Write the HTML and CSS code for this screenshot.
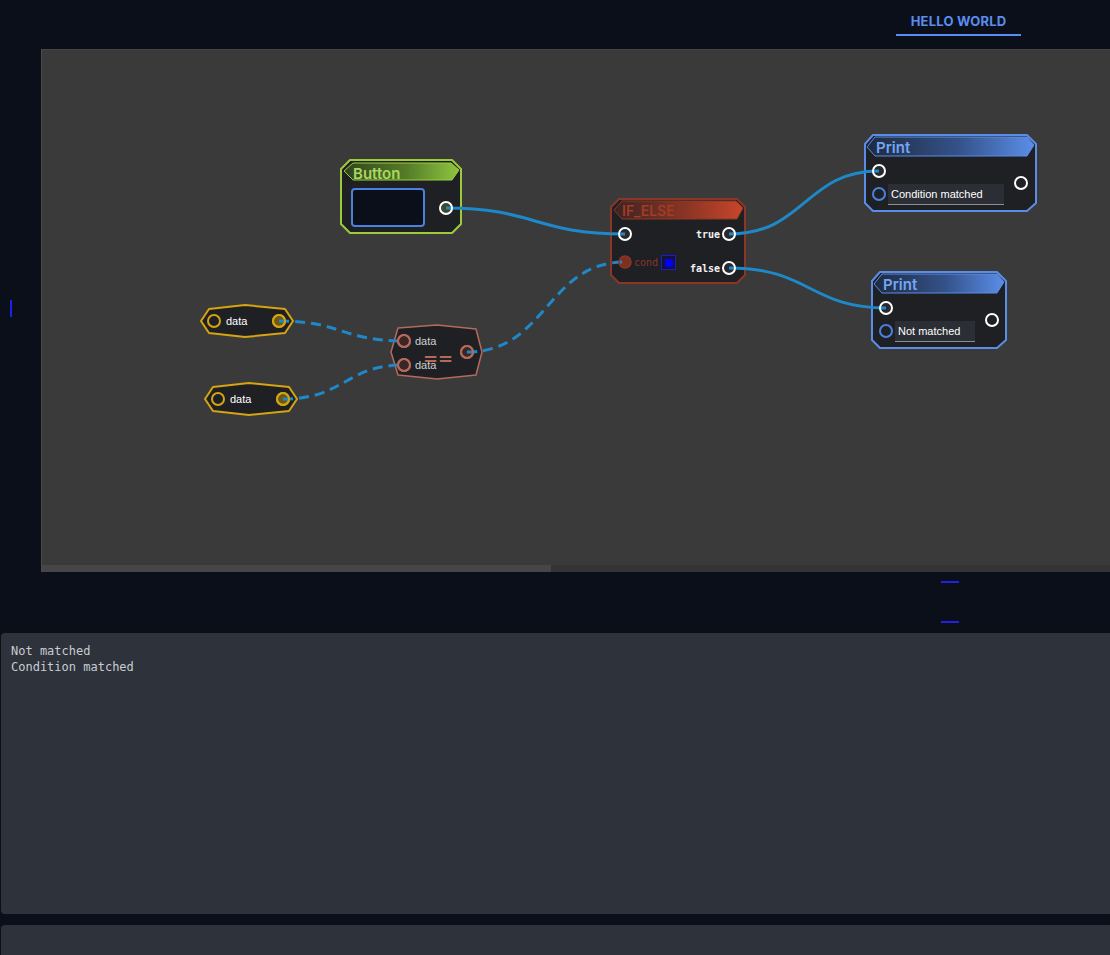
FILE: index.html
```html
<!DOCTYPE html>
<html lang="en">
<head>
<meta charset="utf-8">
<title>Node editor</title>
<link rel="stylesheet" href="styles.css">
</head>
<body>
<header class="topbar">
  <div class="tab">HELLO WORLD</div>
</header>

<section class="editor-row">
  <div class="gutter"><span class="caret"></span></div>
  <div class="canvas">
    <svg class="graph" width="1069" height="516" viewBox="0 0 1069 516" xmlns="http://www.w3.org/2000/svg">
      <defs>
        <linearGradient id="g-green" x1="0" x2="1" y1="0" y2="0">
          <stop offset="0" stop-color="#33421f"/>
          <stop offset="0.55" stop-color="#557d28"/>
          <stop offset="1" stop-color="#8fc640"/>
        </linearGradient>
        <linearGradient id="g-red" x1="0" x2="1" y1="0" y2="0">
          <stop offset="0" stop-color="#3a2423"/>
          <stop offset="0.55" stop-color="#8a3424"/>
          <stop offset="1" stop-color="#c8462a"/>
        </linearGradient>
        <linearGradient id="g-blue" x1="0" x2="1" y1="0" y2="0">
          <stop offset="0" stop-color="#1f2a3e"/>
          <stop offset="0.55" stop-color="#34528a"/>
          <stop offset="1" stop-color="#5b8ee8"/>
        </linearGradient>
      </defs>
      <g transform="translate(-41 -49)">
        <!-- Button node -->
        <g class="node">
          <polygon class="body body-green" points="350,160 452,160 461,169 461,224 452,233 350,233 341,224 341,169"/>
          <polygon class="head-green" points="344,171 353,163 451,163 459,170 452,180 353,180"/>
          <text class="title title-green" x="353" y="173">Button</text>
          <rect class="btn-field" x="352" y="189" width="72" height="37" rx="3"/>
          <circle class="port-fill" cx="446" cy="208" r="6" fill="#3e4a2e"/>
        </g>

        <!-- IF_ELSE node -->
        <g class="node">
          <polygon class="body body-red" points="619,199 737,199 745,207 745,275 737,283 619,283 611,275 611,207"/>
          <polygon class="head-red" points="614,210 622,201 736,201 743,208 737,219 622,219"/>
          <text class="title title-red" x="622" y="210">IF_ELSE</text>
          <circle class="port-fill" cx="625" cy="234" r="6" fill="#2a2a2e"/>
          <text class="mono mono-white" x="720" y="234" text-anchor="end">true</text>
          <circle class="port-fill" cx="729" cy="234" r="6" fill="#2a2a2e"/>
          <circle class="port-cond" cx="625" cy="262" r="6"/>
          <text class="mono mono-red" x="634" y="262">cond</text>
          <rect class="check-box" x="661.5" y="255.5" width="14" height="14"/>
          <rect class="check-fill" x="665" y="259" width="8" height="8"/>
          <text class="mono mono-white" x="720" y="268" text-anchor="end">false</text>
          <circle class="port-fill" cx="729" cy="268" r="6" fill="#2a2a2e"/>
        </g>

        <!-- Print node 1 -->
        <g class="node">
          <polygon class="body body-blue" points="873,135 1027,135 1036,144 1036,203 1027,211 873,211 865,203 865,144"/>
          <polygon class="head-blue" points="867,147 875,137 1027,137 1034,145 1027,156 875,156"/>
          <text class="title title-blue" x="876" y="147">Print</text>
          <circle class="port-fill" cx="879" cy="171" r="6" fill="#2a2a2e"/>
          <circle class="port-fill" cx="1021" cy="183" r="6" fill="#1f2024"/>
          <circle class="port-blue" cx="879" cy="194" r="6"/>
          <rect class="field" x="888" y="184" width="116" height="20"/>
          <line class="field-line" x1="888" y1="204.5" x2="1004" y2="204.5"/>
          <text class="label" x="891" y="194">Condition matched</text>
        </g>

        <!-- Print node 2 -->
        <g class="node">
          <polygon class="body body-blue" points="880,272 997,272 1006,281 1006,340 997,348 880,348 872,340 872,281"/>
          <polygon class="head-blue" points="874,284 882,274 997,274 1004,282 997,293 882,293"/>
          <text class="title title-blue" x="883" y="284">Print</text>
          <circle class="port-fill" cx="886" cy="308" r="6" fill="#2a2a2e"/>
          <circle class="port-fill" cx="992" cy="320" r="6" fill="#1f2024"/>
          <circle class="port-blue" cx="886" cy="331" r="6"/>
          <rect class="field" x="895" y="321" width="80" height="20"/>
          <line class="field-line" x1="895" y1="341.5" x2="975" y2="341.5"/>
          <text class="label" x="898" y="331">Not matched</text>
        </g>

        <!-- data nodes -->
        <g class="node">
          <polygon class="body body-gold" points="209,309 245,305 285,309 293,321 285,333 245,337 209,333 201,321"/>
          <circle class="port-gold" cx="214" cy="321" r="6"/>
          <text class="label" x="226" y="321">data</text>
          <circle class="port-gold port-gold-on" cx="279" cy="321" r="6"/>
        </g>
        <g class="node">
          <polygon class="body body-gold" points="213,387 249,383 289,387 297,399 289,411 249,415 213,411 205,399"/>
          <circle class="port-gold" cx="218" cy="399" r="6"/>
          <text class="label" x="230" y="399">data</text>
          <circle class="port-gold port-gold-on" cx="283" cy="399" r="6"/>
        </g>

        <!-- == node -->
        <g class="node">
          <polygon class="body body-salmon" points="398,328 437,325 476,329 482,352 476,375 437,379 398,375 391,352"/>
          <text class="eq" x="438" y="358" text-anchor="middle">==</text>
          <circle class="port-salmon" cx="404" cy="341" r="6"/>
          <text class="label label-dim" x="415" y="341">data</text>
          <circle class="port-salmon" cx="404" cy="365" r="6"/>
          <text class="label label-dim" x="415" y="365">data</text>
          <circle class="port-salmon" cx="467" cy="352" r="6"/>
        </g>

        <!-- wires -->
        <path class="wire" d="M446,208 C535,208 535,234 625,234"/>
        <path class="wire" d="M729,234 C805,234 805,171 879,171"/>
        <path class="wire" d="M729,268 C810,268 810,308 886,308"/>
        <path class="wire wire-dash" d="M279,321 C342,321 342,341 404,341"/>
        <path class="wire wire-dash" d="M283,399 C345,399 345,365 404,365"/>
        <path class="wire wire-dash" d="M467,352 C547,352 547,262 625,262"/>

        <!-- port rings on top -->
        <circle class="ring-white" cx="446" cy="208" r="6"/>
        <circle class="ring-white" cx="625" cy="234" r="6"/>
        <circle class="ring-white" cx="729" cy="234" r="6"/>
        <circle class="ring-white" cx="729" cy="268" r="6"/>
        <circle class="ring-white" cx="879" cy="171" r="6"/>
        <circle class="ring-white" cx="1021" cy="183" r="6"/>
        <circle class="ring-white" cx="886" cy="308" r="6"/>
        <circle class="ring-white" cx="992" cy="320" r="6"/>
        <circle class="ring-gold" cx="279" cy="321" r="6"/>
        <circle class="ring-gold" cx="283" cy="399" r="6"/>
        <circle class="ring-salmon" cx="404" cy="341" r="6"/>
        <circle class="ring-salmon" cx="404" cy="365" r="6"/>
        <circle class="ring-salmon" cx="467" cy="352" r="6"/>
        <circle class="ring-cond" cx="625" cy="262" r="6"/>
      </g>
    </svg>
    <div class="hscroll"><div class="thumb"></div></div>
  </div>
</section>

<div class="markers">
  <span class="mark"></span>
  <span class="mark"></span>
</div>

<section class="console">
<pre class="log">Not matched
Condition matched</pre>
</section>

<section class="panel2"></section>
</body>
</html>
```

FILE: styles.css
```css
html, body {
  margin: 0;
  padding: 0;
  overflow: hidden;
  background: #0b0f19;
  height: 100%;
}

body {
  font-family: "Liberation Sans", Arial, sans-serif;
}

.topbar {
  height: 49px;
  display: flex;
  justify-content: flex-end;
}

.tab {
  width: 125px;
  margin-right: 89px;
  padding-top: 13px;
  height: 21px;
  line-height: 16px;
  text-align: center;
  font-family: Inter, "Noto Sans", sans-serif;
  font-weight: 700;
  font-size: 13px;
  letter-spacing: 0.2px;
  color: #5b8def;
  border-bottom: 2px solid #5b8def;
}

.editor-row {
  display: flex;
  height: 523px;
}

.gutter {
  width: 41px;
  flex: none;
  display: flex;
  align-items: center;
}

.caret {
  display: block;
  width: 2px;
  height: 17px;
  margin-left: 10px;
  margin-top: -4px;
  background: #1f22e6;
}

.canvas {
  position: relative;
  flex: 1;
  background: #3a3a3a;
  border-left: 1px solid #4a4a4a;
  border-top: 1px solid #444;
  display: flex;
  flex-direction: column;
  overflow: hidden;
}

.graph {
  display: block;
  flex: 1;
  margin-left: -1px;
  margin-top: -1px;
}

.hscroll {
  height: 7px;
  flex: none;
  background: #343434;
  display: flex;
}

.thumb {
  width: 509px;
  background: #464646;
}

.markers {
  height: 61px;
  display: flex;
  flex-direction: column;
  gap: 38px;
  padding-left: 941px;
  padding-top: 9px;
  box-sizing: border-box;
}

.mark {
  display: block;
  width: 18px;
  height: 2px;
  background: #1f22e6;
}

.console {
  height: 281px;
  margin-left: 1px;
  background: #2d323b;
  border-radius: 4px 0 0 4px;
  padding: 10px;
  box-sizing: border-box;
}

.log {
  margin: 0;
  font-family: "DejaVu Sans Mono", "Liberation Mono", monospace;
  font-size: 12px;
  line-height: 16px;
  color: #c9ccd1;
}

.panel2 {
  margin-top: 11px;
  margin-left: 1px;
  height: 60px;
  background: #2d323b;
  border-radius: 4px 0 0 0;
}

/* ---- graph ---- */
.body {
  fill: #1f2024;
  stroke-width: 2;
  stroke-linejoin: round;
}
.body-green { stroke: #9ccc3c; }
.body-red { stroke: #8b3626; }
.body-blue { stroke: #5b8de6; }
.body-gold { stroke: #d6a412; }
.body-salmon { stroke: #b56a5c; stroke-width: 1.5; }

.head-green { fill: url(#g-green); stroke: #9ccc3c; stroke-width: 1; }
.head-red { fill: url(#g-red); stroke: #8b3626; stroke-width: 1; }
.head-blue { fill: url(#g-blue); stroke: #5b8de6; stroke-width: 1; }

.title {
  font-family: Inter, "Noto Sans", sans-serif;
  font-weight: 600;
  font-size: 15px;
  dominant-baseline: central;
}
.title-green { fill: #a8d860; }
.title-blue { fill: #72a6f4; }
.title-red { fill: #a23c25; font-size: 14px; }

.btn-field {
  fill: #0b0f19;
  stroke: #4a80e0;
  stroke-width: 2;
}

.mono {
  font-family: "DejaVu Sans Mono", "Liberation Mono", monospace;
  font-size: 10px;
  font-weight: 700;
  dominant-baseline: central;
}
.mono-white { fill: #f2f2f2; }
.mono-red { fill: #8b3626; font-weight: 400; }

.check-box { fill: #14142a; stroke: #1a1ad8; stroke-width: 1; }
.check-fill { fill: #0000ff; }

.label {
  font-family: "Liberation Sans", Arial, sans-serif;
  font-size: 11px;
  fill: #ffffff;
  dominant-baseline: central;
}
.label-dim { fill: #d0d0d0; }

.field { fill: #2b2e34; }
.field-line { stroke: #8a8d92; stroke-width: 1; }

.port-blue { fill: #1f2024; stroke: #4a80e0; stroke-width: 2; }
.port-cond { fill: #7e3020; stroke: none; }
.port-gold { fill: #1f2024; stroke: #d6a412; stroke-width: 2; }
.port-gold-on { fill: #6b5a14; }
.port-salmon { fill: #3a2624; stroke: #b56a5c; stroke-width: 2; }

.eq {
  font-family: "DejaVu Sans", sans-serif;
  font-weight: 700;
  font-style: italic;
  font-size: 18px;
  fill: #b56a5c;
  dominant-baseline: central;
}

.wire {
  fill: none;
  stroke: #1e88c8;
  stroke-width: 3;
}
.wire-dash { stroke-dasharray: 10 6; }

.ring-white { fill: none; stroke: #ffffff; stroke-width: 2; }
.ring-gold { fill: none; stroke: #d6a412; stroke-width: 2; }
.ring-salmon { fill: none; stroke: #b56a5c; stroke-width: 2; }
.ring-cond { fill: none; stroke: #8b3626; stroke-width: 1.5; }
```
